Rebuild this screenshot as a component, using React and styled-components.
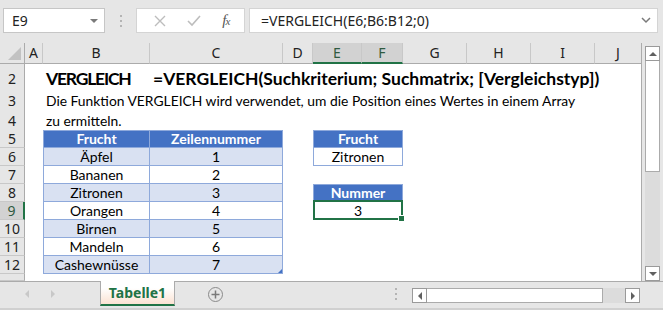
import React from 'react'
import styled, {createGlobalStyle, css} from 'styled-components'

const ui = `"Noto Sans", "Open Sans", sans-serif`
const cellFont = `Lato, "Liberation Sans", sans-serif`
const green = '#217346'
const tblBorder = '#8EA9DB'
const cols = [25, 18, 107, 133, 30, 49, 41, 64, 64, 64, 47]
const template = cols.map(c => `${c}px`).join(' ')

const Global = createGlobalStyle`
  html, body {
    margin: 0;
    padding: 0;
    overflow: hidden;
    background: #e6e6e6;
  }
  * {
    box-sizing: border-box;
  }
`

const Window = styled.div`
  width: 663px;
  height: 310px;
  display: flex;
  flex-direction: column;
  background: #e6e6e6;
  overflow: hidden;
`

const FormulaBar = styled.div`
  height: 43px;
  display: flex;
  align-items: flex-start;
  padding: 8px 0 0 3px;
`

const NameBox = styled.div`
  width: 102px;
  height: 25px;
  background: #fff;
  border: 1px solid #c6c6c6;
  display: flex;
  align-items: center;
  justify-content: space-between;
  padding: 0 6px 0 8px;
  font-family: ${ui};
  font-size: 14px;
  color: #222;
`

const DropTriangle = styled.span`
  width: 0;
  height: 0;
  border-left: 4px solid transparent;
  border-right: 4px solid transparent;
  border-top: 4px solid #7a7a7a;
`

const Dots = styled.div`
  width: 31px;
  height: 25px;
  display: flex;
  flex-direction: column;
  align-items: center;
  justify-content: center;
  gap: 3px;

  span {
    width: 2px;
    height: 2px;
    background: #b4b4b4;
  }
`

const FxBox = styled.div`
  width: 109px;
  height: 25px;
  background: #fff;
  border: 1px solid #d4d4d4;
  display: flex;
  align-items: center;
  justify-content: space-around;
  padding: 0 4px 0 6px;
`

const Fx = styled.span`
  font-family: "Liberation Serif", serif;
  font-style: italic;
  font-size: 15px;
  color: #555;
  letter-spacing: -1px;

  small {
    font-size: 11px;
  }
`

const FormulaInput = styled.div`
  margin-left: 4px;
  width: 409px;
  height: 25px;
  background: #fff;
  border: 1px solid #d4d4d4;
  display: flex;
  align-items: center;
  justify-content: space-between;
  padding: 0 6px 0 11px;
  font-family: ${ui};
  font-size: 14px;
  color: #222;
`

const Main = styled.div`
  display: flex;
  height: 238px;
`

const Sheet = styled.div`
  width: 642px;
  height: 238px;
  background: #fff;
  border-right: 1px solid #ababab;
  overflow: hidden;
`

const Row = styled.div`
  display: grid;
  grid-template-columns: ${template};
  height: ${({$h}) => $h}px;
`

const Corner = styled.div`
  position: relative;
  background: #e6e6e6;
  border-right: 1px solid #ababab;
  border-bottom: 1px solid #ababab;

  &::after {
    content: '';
    position: absolute;
    right: 3px;
    bottom: 3px;
    border-left: 13px solid transparent;
    border-bottom: 13px solid #c2c2c2;
  }
`

const ColHead = styled.div`
  background: ${({$active}) => ($active ? '#d2d2d2' : '#e6e6e6')};
  border-right: 1px solid #c8c8c8;
  border-bottom: ${({$active}) =>
    $active ? `2px solid ${green}` : '1px solid #ababab'};
  font-family: ${ui};
  font-size: 14px;
  color: ${({$active}) => ($active ? '#2f5a40' : '#222')};
  text-align: center;
  line-height: 19px;
`

const RowHead = styled.div`
  background: ${({$active}) => ($active ? '#d2d2d2' : '#e6e6e6')};
  border-right: ${({$active}) =>
    $active ? `2px solid ${green}` : '1px solid #ababab'};
  border-bottom: 1px solid #c8c8c8;
  font-family: ${ui};
  font-size: 14px;
  color: ${({$active}) => ($active ? '#2f5a40' : '#222')};
  text-align: center;
  line-height: ${({$lh}) => $lh || 18}px;
  overflow: hidden;
`

const Cell = styled.div`
  position: relative;
  grid-column: span ${({$span}) => $span || 1};
  white-space: nowrap;
  overflow: visible;
  font-family: ${cellFont};
  font-size: 13.85px;
  color: #000;
  padding-left: 3px;
  line-height: ${({$lh}) => $lh || 18}px;
  z-index: 1;
`

const Title = styled(Cell)`
  font-size: 17.5px;
  font-weight: 700;
  line-height: 30px;
  letter-spacing: ${({$tight}) => ($tight ? '-1.2px' : 'normal')};
`

const variants = {
  head: css`
    background: #4472c4;
    color: #fff;
    font-weight: 700;
  `,
  band: css`
    background: #d9e1f2;
  `,
  plain: css`
    background: #fff;
  `,
}

const TCell = styled.div`
  position: relative;
  grid-column: span ${({$span}) => $span || 1};
  ${({$v}) => variants[$v]}
  border-right: 1px solid ${tblBorder};
  border-bottom: 1px solid ${tblBorder};
  border-left: ${({$first}) => ($first ? `1px solid ${tblBorder}` : 'none')};
  border-top: ${({$top}) => ($top ? `1px solid ${tblBorder}` : 'none')};
  font-family: ${cellFont};
  font-size: 14px;
  text-align: center;
  white-space: nowrap;
  line-height: ${({$top}) => ($top ? 16 : 17)}px;
`

const ResizeGrip = styled.span`
  position: absolute;
  right: 0;
  bottom: 0;
  border-left: 4px solid transparent;
  border-bottom: 4px solid #4472c4;
`

const Selection = styled.span`
  position: absolute;
  left: -1px;
  top: -2px;
  right: -1px;
  bottom: -1px;
  border: 2px solid ${green};
  pointer-events: none;

  &::after {
    content: '';
    position: absolute;
    right: -4px;
    bottom: -4px;
    width: 5px;
    height: 5px;
    background: ${green};
    border: 1px solid #fff;
  }
`

const VScroll = styled.div`
  width: 21px;
  display: flex;
  flex-direction: column;
  padding: 3px 0 0 3px;
`

const ScrollBtn = styled.div`
  width: 15px;
  height: 15px;
  background: #fff;
  border: 1px solid #9a9a9a;
  display: flex;
  align-items: center;
  justify-content: center;
`

const Arrow = styled.span`
  width: 0;
  height: 0;
  ${({$dir}) =>
    ({
      up: css`
        border-left: 4px solid transparent;
        border-right: 4px solid transparent;
        border-bottom: 4px solid #606060;
      `,
      down: css`
        border-left: 4px solid transparent;
        border-right: 4px solid transparent;
        border-top: 4px solid #606060;
      `,
      left: css`
        border-top: 4px solid transparent;
        border-bottom: 4px solid transparent;
        border-right: 4px solid #606060;
      `,
      right: css`
        border-top: 4px solid transparent;
        border-bottom: 4px solid transparent;
        border-left: 4px solid #606060;
      `,
    })[$dir]}
`

const VThumb = styled.div`
  width: 15px;
  height: 111px;
  background: #fff;
  border: 1px solid #ababab;
  border-top: none;
`

const VTrack = styled.div`
  width: 15px;
  flex: 1;
  background: #dcdcdc;
`

const TabBar = styled.div`
  height: 29px;
  display: flex;
  align-items: flex-start;
  border-top: 1px solid #ababab;
  border-bottom: 2px solid #d0d0d0;
`

const Nav = styled.div`
  width: 100px;
  height: 24px;
  display: flex;
  align-items: center;
  padding-left: 25px;
  gap: 22px;
`

const NavArrow = styled.span`
  width: 0;
  height: 0;
  border-top: 4px solid transparent;
  border-bottom: 4px solid transparent;
  ${({$left}) =>
    $left
      ? 'border-right: 4px solid #c8c8c8;'
      : 'border-left: 4px solid #c8c8c8;'}
`

const Tab = styled.div`
  margin-top: -1px;
  width: 75px;
  height: 25px;
  background: linear-gradient(#ffffff 30%, #fbe2d2);
  border-left: 1px solid #ababab;
  border-right: 1px solid #ababab;
  border-bottom: 2px solid ${green};
  font-family: ${ui};
  font-weight: 700;
  font-size: 14px;
  color: ${green};
  text-align: center;
  line-height: 23px;
`

const AddSheet = styled.div`
  margin: 5px 0 0 33px;
  width: 15px;
  height: 15px;
  border: 1.5px solid #8a8a8a;
  border-radius: 50%;
  display: flex;
  align-items: center;
  justify-content: center;
`

const Grip = styled.div`
  margin: 6px 0 0 172px;
  display: flex;
  flex-direction: column;
  gap: 3px;

  span {
    width: 2px;
    height: 2px;
    background: #b4b4b4;
  }
`

const HScroll = styled.div`
  margin: 6px 0 0 15px;
  display: flex;
  height: 15px;
`

const HThumb = styled.div`
  width: 176px;
  background: #fff;
  border: 1px solid #ababab;
  border-left: none;
`

const HTrack = styled.div`
  width: 22px;
  background: #dcdcdc;
`

const fruits = ['Äpfel', 'Bananen', 'Zitronen', 'Orangen', 'Birnen', 'Mandeln', 'Cashewnüsse']
const letters = ['A', 'B', 'C', 'D', 'E', 'F', 'G', 'H', 'I', 'J']

const App = () => (
  <Window>
    <Global />
    <FormulaBar>
      <NameBox>
        E9
        <DropTriangle />
      </NameBox>
      <Dots>
        <span />
        <span />
        <span />
      </Dots>
      <FxBox>
        <svg width="12" height="12" viewBox="0 0 12 12">
          <path d="M1 1 L11 11 M11 1 L1 11" stroke="#bdbdbd" strokeWidth="1.4" />
        </svg>
        <svg width="14" height="12" viewBox="0 0 14 12">
          <path d="M1 6 L5 10 L13 1" stroke="#bdbdbd" strokeWidth="1.6" fill="none" />
        </svg>
        <Fx>
          f<small>x</small>
        </Fx>
      </FxBox>
      <FormulaInput>
        =VERGLEICH(E6;B6:B12;0)
        <svg width="10" height="7" viewBox="0 0 10 7">
          <path d="M1 1 L5 5 L9 1" stroke="#7a7a7a" strokeWidth="1.5" fill="none" />
        </svg>
      </FormulaInput>
    </FormulaBar>

    <Main>
      <Sheet>
        <Row $h={19}>
          <Corner />
          {letters.map(l => (
            <ColHead key={l} $active={l === 'E' || l === 'F'}>
              {l}
            </ColHead>
          ))}
        </Row>
        <Row $h={2}>
          <RowHead />
        </Row>
        <Row $h={26}>
          <RowHead $lh={30}>2</RowHead>
          <Cell />
          <Title $tight>VERGLEICH</Title>
          <Title>=VERGLEICH(Suchkriterium; Suchmatrix; [Vergleichstyp])</Title>
        </Row>
        <Row $h={20}>
          <RowHead $lh={22}>3</RowHead>
          <Cell />
          <Cell $lh={22}>
            Die Funktion VERGLEICH wird verwendet, um die Position eines Wertes in einem Array
          </Cell>
        </Row>
        <Row $h={20}>
          <RowHead $lh={22}>4</RowHead>
          <Cell />
          <Cell $lh={22}>zu ermitteln.</Cell>
        </Row>
        <Row $h={18}>
          <RowHead>5</RowHead>
          <Cell />
          <TCell $v="head" $first $top>
            Frucht
          </TCell>
          <TCell $v="head" $top>
            Zeilennummer
          </TCell>
          <Cell />
          <TCell $v="head" $span={2} $first $top>
            Frucht
          </TCell>
        </Row>
        {fruits.map((f, i) => {
          const r = i + 6
          return (
            <Row key={f} $h={18}>
              <RowHead $active={r === 9}>{r}</RowHead>
              <Cell />
              <TCell $v={i % 2 === 0 ? 'band' : 'plain'} $first>
                {f}
              </TCell>
              <TCell $v={i % 2 === 0 ? 'band' : 'plain'}>
                {i + 1}
                {r === 12 && <ResizeGrip />}
              </TCell>
              <Cell />
              {r === 6 && (
                <TCell $v="plain" $span={2} $first>
                  Zitronen
                </TCell>
              )}
              {r === 8 && (
                <TCell $v="head" $span={2} $first $top>
                  Nummer
                </TCell>
              )}
              {r === 9 && (
                <TCell $v="plain" $span={2} $first>
                  3
                  <Selection />
                </TCell>
              )}
            </Row>
          )
        })}
        <Row $h={7}>
          <RowHead />
        </Row>
      </Sheet>
      <VScroll>
        <ScrollBtn>
          <Arrow $dir="up" />
        </ScrollBtn>
        <VThumb />
        <VTrack />
        <ScrollBtn>
          <Arrow $dir="down" />
        </ScrollBtn>
      </VScroll>
    </Main>

    <TabBar>
      <Nav>
        <NavArrow $left />
        <NavArrow />
      </Nav>
      <Tab>Tabelle1</Tab>
      <AddSheet>
        <svg width="9" height="9" viewBox="0 0 9 9">
          <path d="M4.5 0.5 V8.5 M0.5 4.5 H8.5" stroke="#7a7a7a" strokeWidth="1.5" />
        </svg>
      </AddSheet>
      <Grip>
        <span />
        <span />
        <span />
      </Grip>
      <HScroll>
        <ScrollBtn>
          <Arrow $dir="left" />
        </ScrollBtn>
        <HThumb />
        <HTrack />
        <ScrollBtn>
          <Arrow $dir="right" />
        </ScrollBtn>
      </HScroll>
    </TabBar>
  </Window>
)

export default App
